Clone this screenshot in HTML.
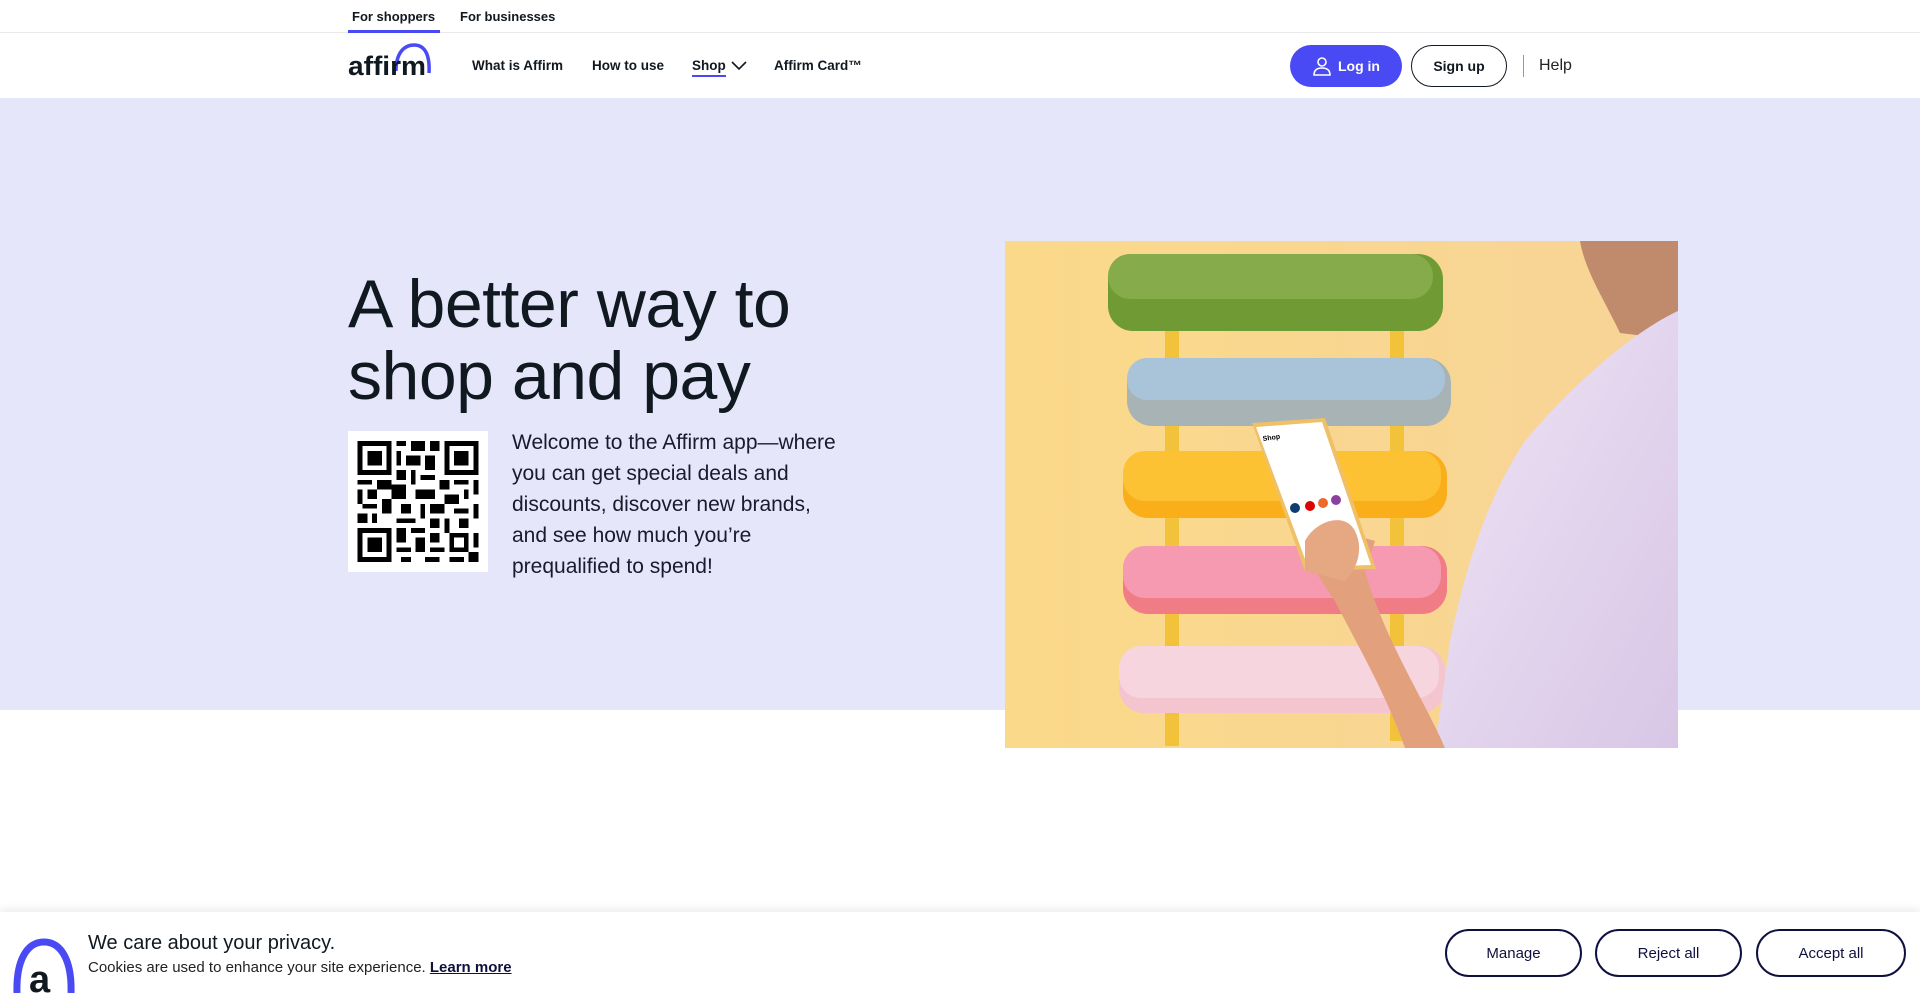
<!DOCTYPE html>
<html><head><meta charset="utf-8"><style>
*{margin:0;padding:0;box-sizing:border-box}
body{width:1920px;height:993px;overflow:hidden;font-family:"Liberation Sans",sans-serif;background:#fff;color:#101820;position:relative}
.top{height:33px;border-bottom:1px solid #ebebef;position:relative}
.top span{position:absolute;top:9px;font-size:13px;font-weight:bold;color:#101820}
.top .ul{position:absolute;left:348px;top:30px;width:92px;height:3px;background:#4a4af4}
.nav{height:65px;position:relative;box-shadow:0 1px 3px rgba(0,0,0,.06)}
.nav .it{position:absolute;top:25px;font-size:13.5px;font-weight:bold}
.btn{position:absolute;border-radius:22px;font-weight:bold;font-size:14px;display:flex;align-items:center;justify-content:center}
.hero{position:absolute;top:98px;left:0;width:1920px;height:612px;background:#e5e6fa}
h1{position:absolute;left:348px;top:268px;font-weight:normal;font-size:68px;line-height:72px;letter-spacing:-0.5px;color:#101820}
.qr{position:absolute;left:348px;top:431px;width:140px;height:141px;background:#fff}
.p{position:absolute;left:512px;top:427px;font-size:21px;line-height:31px;color:#1a1a2a;width:360px;white-space:nowrap}
.cookie{position:absolute;top:912px;left:0;width:1920px;height:81px;background:#fff;box-shadow:0 -3px 8px rgba(0,0,0,.08)}
.cb{position:absolute;top:17px;height:48px;border:2px solid #101040;border-radius:24px;font-size:15px;color:#101040;display:flex;align-items:center;justify-content:center}
</style></head><body>
<div class="top"><span style="left:352px">For shoppers</span><span style="left:460px">For businesses</span><div class="ul"></div></div>
<div class="nav">
<svg style="position:absolute;left:346px;top:0" width="90" height="50" viewBox="0 0 90 50"><path d="M50 38 C50 20 58 12 68 12 C79 12 84 22 83 40" fill="none" stroke="#4a4af4" stroke-width="3.5"/><text x="2" y="42" font-family="Liberation Sans" font-size="27" font-weight="bold" fill="#101820" textLength="78" lengthAdjust="spacingAndGlyphs">affirm</text></svg>
<span class="it" style="left:472px">What is Affirm</span>
<span class="it" style="left:592px">How to use</span>
<span class="it" style="left:692px;border-bottom:2.5px solid #4a4af4;padding-bottom:2px">Shop</span>
<svg style="position:absolute;left:731px;top:28px" width="16" height="10"><path d="M1 1l7 7 7-7" fill="none" stroke="#101820" stroke-width="1.6"/></svg>
<span class="it" style="left:774px">Affirm Card™</span>
<div class="btn" style="left:1290px;top:12px;width:112px;height:42px;background:#4a4af4;color:#fff"><svg width="20" height="20" style="margin-right:6px"><circle cx="10" cy="6" r="4" fill="none" stroke="#fff" stroke-width="1.6"/><path d="M2 19c0-5 3-7 8-7s8 2 8 7z" fill="none" stroke="#fff" stroke-width="1.6"/></svg>Log in</div>
<div class="btn" style="left:1411px;top:12px;width:96px;height:42px;border:1.5px solid #101820;color:#101820">Sign up</div>
<div style="position:absolute;left:1523px;top:22px;width:1px;height:22px;background:#999"></div>
<span style="position:absolute;left:1539px;top:24px;font-size:16px;color:#222">Help</span>
</div>
<div class="hero"></div>
<h1>A better way to<br>shop and pay</h1>
<div class="qr"><svg width="140" height="141" viewBox="0 0 29 29" shape-rendering="crispEdges">
<g fill="#000">
<path d="M2 2h7v7h-7zM3 3v5h5v-5zM4 4h3v3h-3z" fill-rule="evenodd"/>
<path d="M20 2h7v7h-7zM21 3v5h5v-5zM22 4h3v3h-3z" fill-rule="evenodd"/>
<path d="M2 20h7v7h-7zM3 21v5h5v-5zM4 22h3v3h-3z" fill-rule="evenodd"/>
<path d="M10 2h2v1h-2zM13 2h3v2h-3zM17 2h2v2h-2zM10 4h1v3h-1zM12 5h3v2h-3zM16 5h2v3h-2zM10 8h2v2h-2zM13 8h1v3h-1zM15 9h3v1h-3zM2 10h3v1h-3zM6 10h3v2h-3zM19 10h2v2h-2zM22 10h3v1h-3zM26 10h1v3h-1zM2 12h1v3h-1zM4 12h2v2h-2zM9 11h3v3h-3zM14 12h4v2h-4zM20 13h3v2h-3zM24 12h1v2h-1zM3 15h3v1h-3zM7 14h2v3h-2zM11 15h2v2h-2zM15 15h1v3h-1zM17 15h3v2h-3zM22 16h3v1h-3zM26 15h1v3h-1zM2 17h2v2h-2zM5 17h1v2h-1zM10 18h4v1h-4zM17 18h2v2h-2zM20 18h1v3h-1zM23 18h2v2h-2zM10 20h2v3h-2zM13 20h3v1h-3zM14 22h2v3h-2zM17 21h2v2h-2zM21 21h4v4h-4zM22 22v2h2v-2zM26 21h1v3h-1zM10 24h3v1h-3zM11 26h2v1h-2zM17 24h3v1h-3zM16 26h3v1h-3zM21 26h3v1h-3zM25 25h2v2h-2z" fill-rule="evenodd"/>
</g></svg></div>
<div class="p">Welcome to the Affirm app—where<br>you can get special deals and<br>discounts, discover new brands,<br>and see how much you’re<br>prequalified to spend!</div>
<svg style="position:absolute;left:1005px;top:241px" width="673" height="507" viewBox="0 0 673 507" preserveAspectRatio="none">
<defs><linearGradient id="bg" x1="0" x2="1"><stop offset="0" stop-color="#fbd98a"/><stop offset="1" stop-color="#f7d497"/></linearGradient>
<linearGradient id="sh" x1="0" x2="1" y1="0" y2="1"><stop offset="0" stop-color="#efe4f5"/><stop offset="1" stop-color="#d8c6e6"/></linearGradient></defs>
<rect width="673" height="507" fill="url(#bg)"/>
<g fill="#f2c23a"><rect x="160" y="85" width="14" height="420"/><rect x="385" y="80" width="14" height="420"/></g>
<rect x="103" y="13" width="335" height="77" rx="25" fill="#6f9a34"/><rect x="103" y="13" width="325" height="45" rx="22" fill="#86ab4a"/>
<rect x="122" y="117" width="324" height="68" rx="25" fill="#a8b3b6"/><rect x="122" y="117" width="318" height="42" rx="20" fill="#a9c4d8"/>
<rect x="118" y="210" width="324" height="67" rx="25" fill="#f9ae1a"/><rect x="118" y="210" width="318" height="50" rx="22" fill="#fdc234"/>
<rect x="118" y="305" width="324" height="68" rx="25" fill="#f07c86"/><rect x="118" y="305" width="318" height="52" rx="22" fill="#f59ab0"/>
<rect x="114" y="405" width="326" height="67" rx="25" fill="#f4c5cf"/><rect x="114" y="405" width="320" height="52" rx="22" fill="#f7d5de"/>
<path d="M600 0 L673 0 L673 70 L640 92 L610 70 Z" fill="#c89476"/>
<path d="M575 0 C580 30 600 60 615 92 L640 95 L673 70 L673 0 Z" fill="#c08a6c"/>
<path d="M673 70 C630 90 570 140 520 200 C480 260 460 330 445 400 L430 507 L673 507 Z" fill="url(#sh)"/>
<path d="M300 280 C290 300 310 330 330 360 C350 400 380 450 400 507 L440 507 C420 460 380 400 360 330 L370 300 Z" fill="#e2a17c"/>
<polygon points="247,182 320,177 371,328 300,330" fill="#f0c068"/>
<polygon points="251,186 317,181 366,324 303,326" fill="#fff"/>
<text x="258" y="200" font-size="7" font-weight="bold" font-family="Liberation Sans" transform="rotate(-8 258 200)">Shop</text>
<circle cx="290" cy="267" r="5" fill="#0b3d6e"/><circle cx="305" cy="265" r="5" fill="#d00"/><circle cx="318" cy="262" r="5" fill="#ee6a2a"/><circle cx="331" cy="259" r="5" fill="#8c3fa0"/>
<path d="M300 300 C310 280 340 270 350 290 C360 310 350 330 340 340 L300 330 Z" fill="#e6a783"/>
</svg>
<div class="cookie">
<svg style="position:absolute;left:12px;top:16px" width="64" height="65" viewBox="0 0 64 65"><path d="M5 65 C4 34 14 14 32 14 C50 14 60 34 59 65" fill="none" stroke="#4a4af4" stroke-width="7"/><text x="17" y="64" font-family="Liberation Sans" font-size="38" font-weight="bold" fill="#101820">a</text></svg>
<div style="position:absolute;left:88px;top:20px;font-size:20px;color:#101820">We care about your privacy.</div>
<div style="position:absolute;left:88px;top:47px;font-size:15px;color:#222">Cookies are used to enhance your site experience. <b style="text-decoration:underline;color:#101040">Learn more</b></div>
<div class="cb" style="left:1445px;width:137px">Manage</div>
<div class="cb" style="left:1595px;width:147px">Reject all</div>
<div class="cb" style="left:1756px;width:150px">Accept all</div>
</div>
</body></html>
